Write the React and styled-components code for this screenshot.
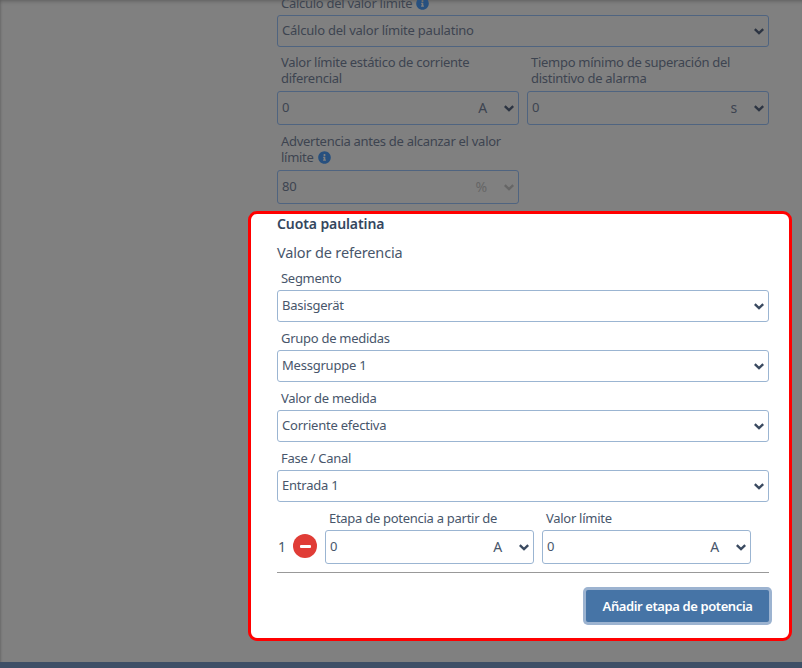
import { createGlobalStyle, styled } from "styled-components";
import { FaInfoCircle } from "react-icons/fa";

const Global = createGlobalStyle`
  html, body { margin: 0; padding: 0; background: #808080; }
  body { font-family: "Noto Sans", "Liberation Sans", sans-serif; }
  * { box-sizing: border-box; }
`;

const Page = styled.div`
  width: 802px;
  height: 668px;
  overflow: hidden;
  display: flex;
  flex-direction: column;
  background: #808080;
  box-shadow: inset 0 4px 4px -3px #5c5c5c, inset 2px 0 2px -1px #6a6a6a;
`;
const Scroller = styled.div`
  flex: 1;
  min-height: 0;
  overflow: hidden;
`;
const Content = styled.div`
  margin-top: -5px;
  padding: 0 33px 0 277px;
`;
const Dimmed = styled.div`
  color: #3d4450;
  padding-bottom: 7px;
`;
const Label = styled.div`
  font-size: 13px;
  line-height: 16px;
  letter-spacing: -0.28px;
  padding: 0 4px;
  margin: 0 0 ${(p) => (p.$gap ? p.$gap : 4)}px;
  color: ${(p) => (p.$dim ? "#3d4450" : "#48566b")};
`;
const Grid = styled.div`
  display: grid;
  grid-template-columns: 242px 242px;
  gap: 8px;
  margin-top: 7px;
`;
const Field = styled.div`
  min-width: 0;
`;
const Box = styled.div`
  height: ${(p) => (p.$h ? p.$h : 32)}px;
  border: 1px solid ${(p) => (p.$dim ? "#4f6480" : "#9bb5d2")};
  border-radius: 3px;
  display: flex;
  align-items: center;
  padding: 0 4px;
  font-size: 13px;
  letter-spacing: -0.22px;
  color: ${(p) => (p.$dim ? "#3d4450" : "#48566b")};
  background: ${(p) => (p.$dim ? "transparent" : "#fff")};
`;
const Value = styled.span`
  flex: 1;
  white-space: nowrap;
  padding-bottom: 2px;
`;
const Unit = styled.span`
  font-size: 14px;
  margin-right: 17px;
  padding-bottom: 2px;
  color: ${(p) => p.$c || "inherit"};
`;
const Card = styled.section`
  margin: 0 -23px 0 -29px;
  height: 430px;
  background: #fff;
  border: 3px solid #ff0000;
  border-radius: 9px;
  padding: 1px 20px 0 26px;
`;
const CardTitle = styled.h3`
  margin: 0;
  font-size: 14px;
  line-height: 18px;
  font-weight: 600;
  letter-spacing: -0.1px;
  color: #34465e;
`;
const SubTitle = styled.h4`
  margin: 9px 0 8px;
  font-size: 14.5px;
  line-height: 20px;
  font-weight: 400;
  letter-spacing: -0.15px;
  color: #48566b;
`;
const Stack = styled.div`
  margin-bottom: 8px;
`;
const StepRow = styled.div`
  display: flex;
  align-items: flex-end;
  padding-bottom: 8px;
  border-bottom: 1px solid #999;
`;
const StepNo = styled.span`
  width: 16px;
  height: 34px;
  display: flex;
  align-items: center;
  padding: 0 0 2px 1px;
  font-size: 14px;
  color: #48566b;
`;
const Minus = styled.span`
  width: 24px;
  height: 24px;
  margin: 0 8px 6px 0;
  border-radius: 50%;
  background: #e03c36;
  display: flex;
  align-items: center;
  justify-content: center;
  &::before {
    content: "";
    width: 11px;
    height: 3px;
    border-radius: 1px;
    background: #fff;
  }
`;
const StepField = styled.div`
  width: 209px;
  margin-right: 8px;
`;
const Actions = styled.div`
  display: flex;
  justify-content: flex-end;
  margin-top: 17px;
`;
const Button = styled.button`
  width: 183px;
  height: 32px;
  border: 0;
  border-radius: 2px;
  box-shadow: 0 0 0 3px #9cb3d0;
  background: #4674a6;
  color: #fff;
  font: 600 13px "Noto Sans", sans-serif;
  letter-spacing: -0.4px;
  padding: 0;
`;
const Footer = styled.div`
  height: 6px;
  background: #3e4f66;
  flex: none;
`;
const Info = styled(FaInfoCircle)`
  width: 13px;
  height: 13px;
  color: #27507f;
  margin-left: 4px;
  vertical-align: -2px;
`;

const Chevron = ({ color = "#3a4a60" }) => (
  <svg width="10" height="7" viewBox="0 0 10 7" fill="none">
    <path d="M0.8 1.2 L5 5.2 L9.2 1.2" stroke={color} strokeWidth="2.4" />
  </svg>
);

const Select = ({ value, unit, dim, h, unitColor, chevColor }) => (
  <Box $dim={dim} $h={h}>
    <Value>{value}</Value>
    {unit && <Unit $c={unitColor}>{unit}</Unit>}
    <Chevron color={chevColor || (dim ? "#2c3442" : "#3a4a60")} />
  </Box>
);

export default function App() {
  return (
    <Page>
      <Global />
      <Scroller>
        <Content>
          <Dimmed>
            <Label $dim>
              Cálculo del valor límite
              <Info />
            </Label>
            <Select dim value="Cálculo del valor límite paulatino" />
            <Grid>
              <Field>
                <Label $dim $gap={5}>Valor límite estático de corriente diferencial</Label>
                <Select dim h={34} value="0" unit="A" />
              </Field>
              <Field>
                <Label $dim $gap={5}>Tiempo mínimo de superación del distintivo de alarma</Label>
                <Select dim h={34} value="0" unit="s" />
              </Field>
              <Field>
                <Label $dim $gap={5}>
                  Advertencia antes de alcanzar el valor límite
                  <Info />
                </Label>
                <Select dim h={34} value="80" unit="%" unitColor="#666" chevColor="#666" />
              </Field>
            </Grid>
          </Dimmed>
          <Card>
            <CardTitle>Cuota paulatina</CardTitle>
            <SubTitle>Valor de referencia</SubTitle>
            <Stack>
              <Label>Segmento</Label>
              <Select value="Basisgerät" />
            </Stack>
            <Stack>
              <Label>Grupo de medidas</Label>
              <Select value="Messgruppe 1" />
            </Stack>
            <Stack>
              <Label>Valor de medida</Label>
              <Select value="Corriente efectiva" />
            </Stack>
            <Stack>
              <Label>Fase / Canal</Label>
              <Select value="Entrada 1" />
            </Stack>
            <StepRow>
              <StepNo>1</StepNo>
              <Minus />
              <StepField>
                <Label>Etapa de potencia a partir de</Label>
                <Select h={34} value="0" unit="A" />
              </StepField>
              <StepField>
                <Label>Valor límite</Label>
                <Select h={34} value="0" unit="A" />
              </StepField>
            </StepRow>
            <Actions>
              <Button>Añadir etapa de potencia</Button>
            </Actions>
          </Card>
        </Content>
      </Scroller>
      <Footer />
    </Page>
  );
}
